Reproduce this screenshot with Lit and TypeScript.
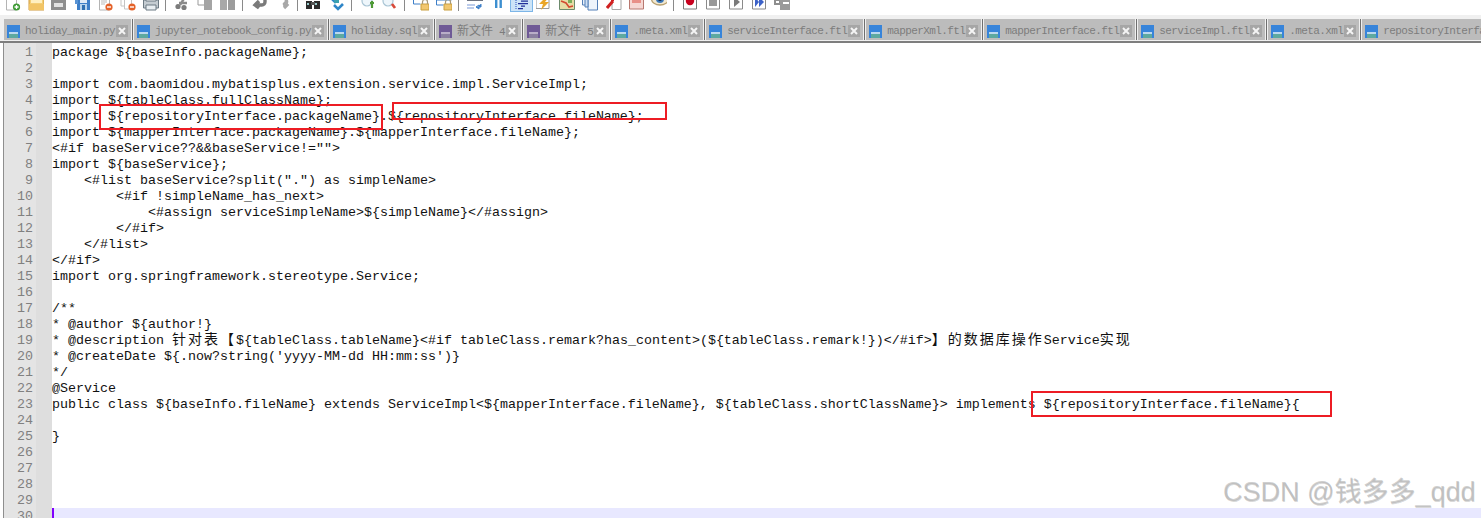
import { LitElement, html, css, svg } from "lit";
import { customElement } from "lit/decorators.js";

const TABS: [string, boolean][] = [
  ["holiday_main.py", false],
  ["jupyter_notebook_config.py", false],
  ["holiday.sql", false],
  ["新文件 4", true],
  ["新文件 5", true],
  [".meta.xml", false],
  ["serviceInterface.ftl", false],
  ["mapperXml.ftl", false],
  ["mapperInterface.ftl", false],
  ["serviceImpl.ftl", false],
  [".meta.xml", false],
  ["repositoryInterface.ftl", false],
];

const C = (t: string) => html`<span class="cjk">${t}</span>`;

const LINES: unknown[] = [
  "package ${baseInfo.packageName};",
  "",
  "import com.baomidou.mybatisplus.extension.service.impl.ServiceImpl;",
  "import ${tableClass.fullClassName};",
  "import ${repositoryInterface.packageName}.${repositoryInterface.fileName};",
  "import ${mapperInterface.packageName}.${mapperInterface.fileName};",
  '<#if baseService??&&baseService!="">',
  "import ${baseService};",
  '    <#list baseService?split(".") as simpleName>',
  "        <#if !simpleName_has_next>",
  "            <#assign serviceSimpleName>${simpleName}</#assign>",
  "        </#if>",
  "    </#list>",
  "</#if>",
  "import org.springframework.stereotype.Service;",
  "",
  "/**",
  "* @author ${author!}",
  html`* @description ${C("针对表【")}\${tableClass.tableName}&lt;#if tableClass.remark?has_content&gt;(\${tableClass.remark!})&lt;/#if&gt;${C("】的数据库操作")}Service${C("实现")}`,
  "* @createDate ${.now?string('yyyy-MM-dd HH:mm:ss')}",
  "*/",
  "@Service",
  "public class ${baseInfo.fileName} extends ServiceImpl<${mapperInterface.fileName}, ${tableClass.shortClassName}> implements ${repositoryInterface.fileName}{",
  "",
  "}",
  "",
  "",
  "",
  "",
  "",
];

// toolbar icons: [x, svg body]; each viewBox is 16 x 16 with the top cut off by the window edge
const ICONS: [number, unknown][] = [
  [5, svg`<path d="M1.5 0h10v13h-10z" fill="#fff" stroke="#b4b4b4"/><circle cx="11.5" cy="10" r="3.6" fill="#3f9b36"/><path d="M9.5 10h4M11.5 8v4" stroke="#fff" stroke-width="1.3"/>`],
  [28, svg`<path d="M1 0h15v13H1z" fill="#f4cf76" stroke="#d09a3c"/><path d="M3 3h11v3H3z" fill="#fff0c0"/><path d="M1 7h15v6H1z" fill="#f2c566"/>`],
  [51, svg`<path d="M0 0h15v13H0z" fill="#8e8e8e"/><path d="M3 6h9v4H3z" fill="#e2e2e2"/>`],
  [75, svg`<path d="M2 0h13v13H2z" fill="#3d7fc8"/><path d="M0 0h3v7H0z" fill="#5a94d4"/><path d="M5 3h7v3H5z" fill="#dfeaf6"/><path d="M5 7h7v6H5z" fill="#b9d4ec"/><path d="M7 8h3v5H7z" fill="#2f6fb0"/>`],
  [98, svg`<path d="M1.5 0h10v13h-10z" fill="#fff" stroke="#b4b4b4"/><path d="M3 3h6M3 5h6M3 7h4" stroke="#bbb"/><circle cx="11" cy="10" r="3.6" fill="#e4622a"/><path d="M9 10h4" stroke="#fff" stroke-width="1.4"/>`],
  [120, svg`<path d="M1 0h7v9H1z" fill="#fff" stroke="#c4c4c4"/><path d="M4.5 0h7v12h-7z" fill="#fff" stroke="#c4c4c4"/><circle cx="12" cy="10" r="3.6" fill="#e4622a"/><path d="M10 10h4" stroke="#fff" stroke-width="1.4"/>`],
  [143, svg`<path d="M0.5 3h15v8H.5z" fill="#c4ccd2" stroke="#6c7a84"/><path d="M3 0h10v4H3z" fill="#fff" stroke="#6c7a84"/><path d="M3 8h10v5H3z" fill="#e8eef2" stroke="#6c7a84"/>`],
  [175, svg`<path d="M10 0L5 8M12 6H4" fill="none" stroke="#8a8a8a" stroke-width="2.4"/><circle cx="3" cy="9.5" r="2.6" fill="#7c7c7c"/><circle cx="9" cy="10.5" r="2.6" fill="#7c7c7c"/>`],
  [197, svg`<path d="M1 0h9v8H1z" fill="#fff" stroke="#9a9a9a"/><path d="M7 3h8v10H7z" fill="#a4a4a4"/>`],
  [220, svg`<path d="M0 0h7v13H0z" fill="#a8a8a8"/><path d="M8 0h7v13H8z" fill="#9c9c9c"/><path d="M7 0h1v13H7z" fill="#fff"/>`],
  [252, svg`<path d="M13 1v4a3 3 0 0 1-3 3H4M7 4L3 8l4 3" fill="none" stroke="#7a7a7a" stroke-width="3.4"/>`],
  [275, svg`<path d="M1 1h8a4 4 0 0 1 2 6l-3 1M9 5l3 3-3 3" fill="none" stroke="#a8a8a8" stroke-width="3.2"/>`],
  [306, svg`<path d="M0 4h6v8H0zM8 4h6v8H8z" fill="#2c2c2c"/><path d="M5 5h4v3H5z" fill="#555"/><path d="M1 6h2v2H1zM9 6h2v2H9z" fill="#9cc"/>`],
  [328, svg`<path d="M2 0l5 5 5-5M6 8l4 4 5-5" fill="none" stroke="#2f86c8" stroke-width="2.6"/><path d="M6 3h5v3H6z" fill="#3aa0b0"/>`],
  [360, svg`<circle cx="7" cy="4" r="5" fill="#eef6fb" stroke="#a8c4d4" stroke-width="1.2"/><path d="M10 6h4M12 4v7" stroke="#4f9a36" stroke-width="2.2"/>`],
  [382, svg`<circle cx="6" cy="4" r="5" fill="#eef6fb" stroke="#a8c4d4" stroke-width="1.2"/><path d="M10 7l3 4" stroke="#d84a3a" stroke-width="2.6"/>`],
  [413, svg`<path d="M.5 0v7h7" fill="none" stroke="#3d7fc8"/><path d="M8 7h8v6H8z" fill="#f2c76e" stroke="#c9a040"/><path d="M9.5 7V5a2.4 2.4 0 0 1 5 0v2" fill="none" stroke="#a89a7a" stroke-width="1.2"/>`],
  [436, svg`<path d="M.5 3h15M.5 3v5h7" fill="none" stroke="#3d7fc8"/><path d="M8 7h8v6H8z" fill="#f2c76e" stroke="#c9a040"/><path d="M9.5 7V5a2.4 2.4 0 0 1 5 0v2" fill="none" stroke="#a89a7a" stroke-width="1.2"/>`],
  [467, svg`<path d="M0 3h16" stroke="#30384c" stroke-width="1.4"/><path d="M0 8h8M0 11h7" stroke="#7a9ad8" stroke-width="1.2"/><path d="M9 10h5V7M9 10l3-2v4z" stroke="#3d7fc8" fill="#3d7fc8"/>`],
  [490, svg`<path d="M5 0h2.4v11H5zM9.5 0h2.4v11H9.5z" fill="#3d8fd0"/>`],
  [512, svg`<path d="M6 1h10v1.3H6zM9 3.5h7v1.3H9zM6 6h10v1.3H6zM9 8.500h4v1.3H9zM6 11h5v1.3H6z" fill="#22309a"/><path d="M4 1v12" stroke="#2a50c0" stroke-dasharray="1 1"/>`],
  [536, svg`<path d="M0 .5h13v11H0z" fill="#fff" stroke="#9a9a9a"/><path d="M10 0L3 7h4l-2 6 8-8H9l4-5z" fill="#eaa628"/>`],
  [559, svg`<path d="M.5 .5h15v12H.5z" fill="#e6dca6" stroke="#6c8a6c"/><path d="M2 4l5 2 3 4 4-1" fill="none" stroke="#d24a30" stroke-width="1.6"/><path d="M9 2h4v4H9z" fill="#7aae5a"/>`],
  [582, svg`<path d="M.5 0v8h6" fill="#e8f0fa" stroke="#5580b8"/><path d="M6 0h9.500v13H6z" fill="#eef4fb" stroke="#5580b8"/><path d="M3 0h3v10H3z" fill="#cfe0f4" stroke="#5580b8"/>`],
  [606, svg`<path d="M6 .5h9v12H6z" fill="#fff" stroke="#a8a8a8"/><path d="M1 11L7 4" stroke="#d02020" stroke-width="3"/><path d="M5 1h3v3H5z" fill="#d02020"/>`],
  [629, svg`<path d="M.5 0h14v12H.5z" fill="#f6d8d4" stroke="#b87870"/><path d="M3 3h9v3H3z" fill="#e89088"/>`],
  [651, svg`<ellipse cx="9" cy="2" rx="8.500" ry="6" fill="#f2e8d0" stroke="#b8a070" stroke-width="1.300"/><circle cx="9" cy="2" r="4" fill="#3c78b8"/><circle cx="9" cy="2" r="2" fill="#1a2a44"/>`],
  [683, svg`<path d="M.5 0h13v12H.5z" fill="#fff" stroke="#7a7a7a"/><circle cx="7" cy="4" r="4.200" fill="#c8001e"/>`],
  [706, svg`<path d="M.5 0h13v12H.5z" fill="#fff" stroke="#8a8a8a"/><path d="M3 1h8v8H3z" fill="#989898"/>`],
  [729, svg`<path d="M.5 0h13v12H.5z" fill="#fff" stroke="#8a8a8a"/><path d="M5 0l6 5-6 5z" fill="#7a7a7a"/>`],
  [752, svg`<path d="M.5 0h13v12H.5z" fill="#fff" stroke="#8a8a8a"/><path d="M3 0l4 5-4 5zM7 0l5 5-5 5z" fill="#3d62c8"/>`],
  [774, svg`<path d="M0 0h8v8H0z" fill="#8e8e8e"/><path d="M6 3h10v10H6z" fill="#9a9a9a"/><path d="M9 5h6v2H9z" fill="#fff"/><path d="M2 4h3v2H2z" fill="#fff"/>`],
];

const SEPS = [165, 242, 297, 351, 404, 458, 673];

@customElement("app-root")
export class AppRoot extends LitElement {
  static styles = css`
    :host { display: block; width: 1481px; height: 518px; overflow: hidden; background: #fff; position: relative; }
    .toolbar { height: 15px; position: relative; background: #fff; overflow: hidden; }
    .tool { position: absolute; top: -3px; width: 16px; height: 16px; }
    .hl { position: absolute; left: 510px; top: 0; width: 23px; height: 12px; background: #cde4f7; border: 1px solid #7db6e8; border-top: 0; box-sizing: border-box; }
    .sep { position: absolute; top: 0; width: 1px; height: 11px; background: #8a8a8a; }
    .tabstrip { height: 28px; background: #f0f0f0; border-bottom: 2px solid #7e7e7e; box-sizing: border-box; display: flex; gap: 3px; padding: 4px 0 1px 4px; overflow: hidden; }
    .tab { flex: none; height: 21px; background: #bcbcbc; display: flex; align-items: center; box-sizing: border-box; padding: 3px 3px 0 3px; position: relative; }
    .tab::after { content: ""; position: absolute; right: -2px; top: 0; bottom: 0; width: 1px; background: #6e6e6e; }
    .tab svg.disk { flex: none; width: 13px; height: 13px; margin-right: 5px; }
    .tab .name { font: 11px/18px "Liberation Mono", "Noto Sans CJK SC", monospace; letter-spacing: -0.6px; color: #7c7c7c; white-space: pre; margin-right: 1px; }
    .tab .name .zh { font-size: 12px; letter-spacing: 0; font-family: "Noto Sans CJK SC", sans-serif; }
    .close { flex: none; width: 12px; height: 12px; background: #a6a6a6; display: block; }
    .editor { height: 475px; display: flex; padding-left: 3px; overflow: hidden; }
    .frame { flex: none; width: 1px; background: #8e8e8e; }
    .nums { flex: none; width: 32px; background: #e4e4e4; text-align: right; padding: 2px 3px 0 0; box-sizing: border-box; color: #808080; font: 13.333px/16px "Liberation Mono", monospace; }
    .num { height: 16px; }
    .fold { flex: none; width: 16px; background: #dedede; }
    .code { flex: 1; padding-top: 2px; min-width: 0; font: 13.333px/16px "Liberation Mono", "Noto Sans CJK SC", monospace; color: #111; }
    .line { height: 16px; white-space: pre; }
    .line.cur { background: #e8e8ff; box-shadow: inset 2px 0 #8000ff; margin-top: -1px; height: 17px; }
    .cjk { font-family: "Noto Sans CJK SC", sans-serif; font-size: 14px; letter-spacing: 2px; line-height: 0; }
    .box { position: absolute; border: 2px solid #ed1c24; box-sizing: border-box; pointer-events: none; }
    .b1 { left: 99px; top: 104px; width: 284px; height: 26px; }
    .b2 { left: 392px; top: 102px; width: 275px; height: 18px; }
    .b3 { left: 1031px; top: 391px; width: 301px; height: 26px; }
    .mark { position: absolute; left: 1223px; top: 474px; font: 27px/36px "Liberation Sans", "Noto Sans CJK SC", sans-serif; color: rgba(175, 175, 175, 0.6); text-shadow: 0.6px 0.6px 0.6px rgba(120,120,120,.3); white-space: pre; }
  `;

  private disk(purple: boolean) {
    const a = purple ? "#6f5a96" : "#3784da";
    const b = purple ? "#b9aec8" : "#bcd8ee";
    const c = purple ? "#8a7fa0" : "#5ea9a0";
    return html`<svg class="disk" viewBox="0 0 13 13">
      <path d="M0 0h13v13H0z" fill=${a}/>
      <path d="M2 7h9v6H2z" fill=${b}/>
      <path d="M2 9h9v4H2z" fill=${c}/>
    </svg>`;
  }

  private closeIcon() {
    return html`<svg class="close" viewBox="0 0 12 12"><path d="M3 3l6 6M9 3l-6 6" stroke="#f4f4f4" stroke-width="2" fill="none"/></svg>`;
  }

  private tabName(t: string) {
    if (/^新/.test(t)) return html`<span class="name"><span class="zh">${t.slice(0, 3)}</span><span class="tail"> ${t.slice(4)}</span></span>`;
    return html`<span class="name">${t}</span>`;
  }

  render() {
    return html`
      <div class="toolbar">
        <div class="hl"></div>
        ${SEPS.map((x) => html`<div class="sep" style="left:${x}px"></div>`)}
        ${ICONS.map(([x, body]) => html`<svg class="tool" style="left:${x}px" viewBox="0 0 16 16">${body}</svg>`)}
      </div>
      <div class="tabstrip">
        ${TABS.map(([t, p]) => html`<div class="tab">${this.disk(p)}${this.tabName(t)}${this.closeIcon()}</div>`)}
      </div>
      <div class="editor">
        <div class="frame"></div>
        <div class="nums">${LINES.map((_, i) => html`<div class="num">${i + 1}</div>`)}</div>
        <div class="fold"></div>
        <div class="code">${LINES.map((l, i) => html`<div class="line ${i === 29 ? "cur" : ""}">${l}</div>`)}</div>
      </div>
      <div class="box b1"></div>
      <div class="box b2"></div>
      <div class="box b3"></div>
      <div class="mark">CSDN @钱多多_qdd</div>
    `;
  }
}
